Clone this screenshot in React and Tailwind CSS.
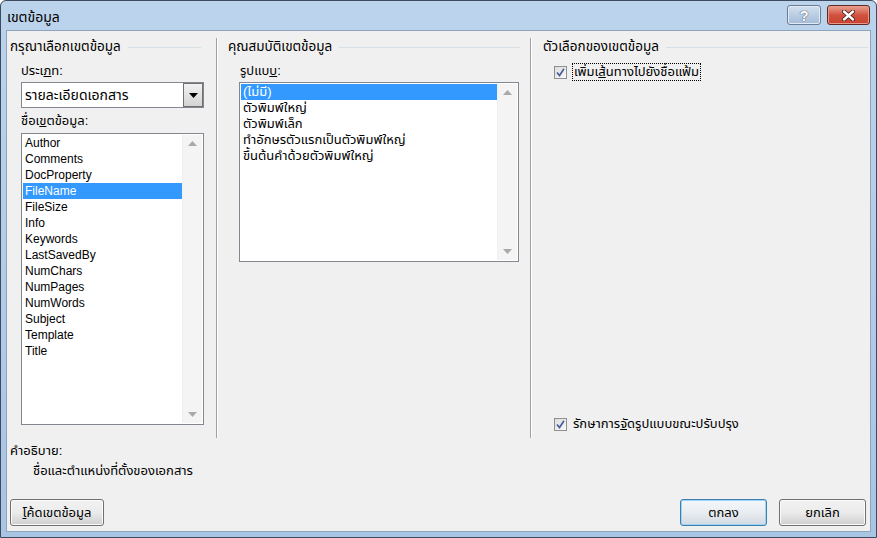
import React from 'react';

const FONT = { fontFamily: 'Tahoma, "Liberation Sans", "Noto Sans Thai", "DejaVu Sans", sans-serif' };

const fieldNames = [
    'Author', 'Comments', 'DocProperty', 'FileName', 'FileSize', 'Info', 'Keywords',
    'LastSavedBy', 'NumChars', 'NumPages', 'NumWords', 'Subject', 'Template', 'Title',
];

const formats = [
    '(ไม่มี)',
    'ตัวพิมพ์ใหญ่',
    'ตัวพิมพ์เล็ก',
    'ทำอักษรตัวแรกเป็นตัวพิมพ์ใหญ่',
    'ขึ้นต้นคำด้วยตัวพิมพ์ใหญ่',
];

// Group heading with the thin etched line after it
const GroupHeading = ({ children, className = '' }) => (
    <div className={`flex items-center h-[16px] text-[13.5px] ${className}`}>
        <span className="whitespace-nowrap">{children}</span>
        <div className="flex-1 h-px bg-[#d5dfe5] ml-[7px]" />
    </div>
);

// Win7-like vertical scrollbar that only shows the arrows
const ScrollTrack = () => (
    <div className="w-[20px] bg-[#f4f4f4] flex flex-col justify-between items-center py-[6px] border-l border-[#f0f0f0]">
        <svg width="9" height="5" viewBox="0 0 9 5"><path d="M4.5 0 L9 5 L0 5 Z" fill="#a9a9a9" /></svg>
        <svg width="9" height="5" viewBox="0 0 9 5"><path d="M0 0 L9 0 L4.5 5 Z" fill="#a9a9a9" /></svg>
    </div>
);

const ListBox = ({ items, selected, className, textSize }) => (
    <div className={`flex border border-[#828790] bg-white p-px ${className}`}>
        <div className={`flex-1 flex flex-col ${textSize}`}>
            {items.map((it, i) => (
                <div
                    key={it}
                    className={`h-[16px] leading-[16px] pl-[2px] whitespace-nowrap ${i === selected ? 'bg-[#3399ff] text-white' : 'text-black'}`}
                >
                    {it}
                </div>
            ))}
        </div>
        <ScrollTrack />
    </div>
);

const CheckBox = () => (
    <div className="w-[13px] h-[13px] border border-[#8e8f8f] bg-gradient-to-br from-[#dcdcdc] to-[#fbfbfb] flex items-center justify-center">
        <svg width="9" height="9" viewBox="0 0 9 9">
            <path d="M1 4.5 L3.5 7.5 L8 0.8" fill="none" stroke="#4a5f97" strokeWidth="1.7" />
        </svg>
    </div>
);

const Button = ({ children, primary, className = 'w-[87px]' }) => (
    <div
        className={`${className} h-[27px] rounded-[3px] border flex items-center justify-center ${
            primary
                ? 'border-[#3c7fb1] shadow-[inset_0_0_0_1px_#9fd3f2] bg-gradient-to-b from-[#f4f7fa] via-[#e9edf1] to-[#d3dae1]'
                : 'border-[#707070] shadow-[inset_0_0_0_1px_#fbfbfb] bg-gradient-to-b from-[#f2f2f2] via-[#ebebeb] to-[#cfcfcf]'
        }`}
    >
        {children}
    </div>
);

export default function App() {
    return (
        <div
            style={FONT}
            className="w-[877px] h-[538px] bg-gradient-to-b from-[#bcd3ec] to-[#a9c5e4] border border-[#3c4b5f] rounded-t-[6px] flex flex-col text-[13px] text-black overflow-hidden"
        >
            {/* Title bar */}
            <div className="h-[29px] flex items-start justify-between pl-[6px] pr-[6px]">
                <div className="mt-[6px] text-[14px]">เขตข้อมูล</div>
                <div className="flex gap-[6px] mt-[4px]">
                    <div className="w-[34px] h-[20px] rounded-[3px] border border-[#6b7d94] bg-gradient-to-b from-[#d3e1f0] via-[#b9cde4] to-[#a5bcd8] flex items-center justify-center shadow-[inset_0_0_0_1px_#e2ebf5]">
                        <span className="text-white font-bold text-[15px] leading-none [text-shadow:0_0_1px_#3b4a5e,0_0_1px_#3b4a5e]">?</span>
                    </div>
                    <div className="w-[43px] h-[20px] rounded-[3px] border border-[#5f2a22] bg-gradient-to-b from-[#e8a193] via-[#d1523f] to-[#c7442f] flex items-center justify-center shadow-[inset_0_0_0_1px_#e79a8b]">
                        <svg width="13" height="11" viewBox="0 0 13 11">
                            <path d="M2 1.5 L11 9.5 M11 1.5 L2 9.5" stroke="#3d1a14" strokeWidth="4" strokeLinecap="round" />
                            <path d="M2 1.5 L11 9.5 M11 1.5 L2 9.5" stroke="#ffffff" strokeWidth="2.4" strokeLinecap="round" />
                        </svg>
                    </div>
                </div>
            </div>

            {/* Client area */}
            <div className="flex-1 mx-[5px] mb-[5px] bg-[#f0f0f0] border border-[#8ea3bc] flex flex-col">
                <div className="flex h-[407px] pt-[7px]">
                    {/* Left group */}
                    <div className="w-[209px] pl-[3px] pr-[15px] pt-[1px] flex flex-col">
                        <GroupHeading>กรุณาเลือกเขตข้อมูล</GroupHeading>
                        <div className="pl-[11px] mt-[8px] h-[16px] leading-[16px]">
                            ประเ<span className="underline">ภ</span>ท:
                        </div>
                        <div className="ml-[11px] mt-[3px] w-[183px] h-[26px] border border-[#828790] bg-white flex items-center">
                            <div className="flex-1 pl-[3px] text-[14px]">รายละเอียดเอกสาร</div>
                            <div className="w-[20px] h-[24px] border border-[#707070] bg-gradient-to-b from-[#f2f2f2] to-[#d4d4d4] flex items-center justify-center">
                                <svg width="9" height="5" viewBox="0 0 9 5"><path d="M0 0 L9 0 L4.5 5 Z" fill="#000" /></svg>
                            </div>
                        </div>
                        <div className="pl-[11px] mt-[5px] h-[16px] leading-[16px]">
                            ชื่อเ<span className="underline">ข</span>ตข้อมูล:
                        </div>
                        <ListBox items={fieldNames} selected={3} textSize="text-[12px]" className="ml-[11px] mt-[4px] w-[183px] h-[292px]" />
                    </div>

                    <div className="w-px bg-[#a0a0a0] border-r border-white box-content" />

                    {/* Middle group */}
                    <div className="w-[312px] pl-[10px] pr-[10px] pt-[1px] flex flex-col">
                        <GroupHeading>คุณสมบัติเขตข้อมูล</GroupHeading>
                        <div className="pl-[12px] mt-[8px] h-[16px] leading-[16px]">
                            รูปแบ<span className="underline">บ</span>:
                        </div>
                        <ListBox items={formats} selected={0} textSize="text-[13px]" className="ml-[11px] mt-[3px] w-[280px] h-[180px]" />
                    </div>

                    <div className="w-px bg-[#a0a0a0] border-r border-white box-content" />

                    {/* Right group */}
                    <div className="flex-1 pl-[11px] pr-[2px] pt-[1px] flex flex-col">
                        <GroupHeading>ตัวเลือกของเขตข้อมูล</GroupHeading>
                        <div className="flex items-center mt-[8px] ml-[11px]">
                            <CheckBox />
                            <div className="ml-[5px] px-[1px] border border-dotted border-black h-[18px] leading-[16px]">
                                เพิ่มเ<span className="underline">ส</span>้นทางไปยังชื่อแฟ้ม
                            </div>
                        </div>
                        <div className="flex-1" />
                        <div className="flex items-center ml-[11px] mb-[5px]">
                            <CheckBox />
                            <div className="ml-[6px] h-[17px] leading-[16px]">
                                รักษาการ<span className="underline">จั</span>ดรูปแบบขณะปรับปรุง
                            </div>
                        </div>
                    </div>
                </div>

                {/* Description */}
                <div className="pl-[3px] mt-[5px] h-[16px] leading-[16px]">คำอธิบาย:</div>
                <div className="pl-[26px] mt-[4px] h-[16px] leading-[16px]">ชื่อและตำแหน่งที่ตั้งของเอกสาร</div>

                {/* Buttons */}
                <div className="flex items-center mt-[20px] pl-[3px] pr-[4px]">
                    <Button className="w-[94px]">
                        <span><span className="underline">โ</span>ค้ดเขตข้อมูล</span>
                    </Button>
                    <div className="flex-1" />
                    <Button primary>ตกลง</Button>
                    <div className="w-[12px]" />
                    <Button>ยกเลิก</Button>
                </div>
            </div>
        </div>
    );
}
